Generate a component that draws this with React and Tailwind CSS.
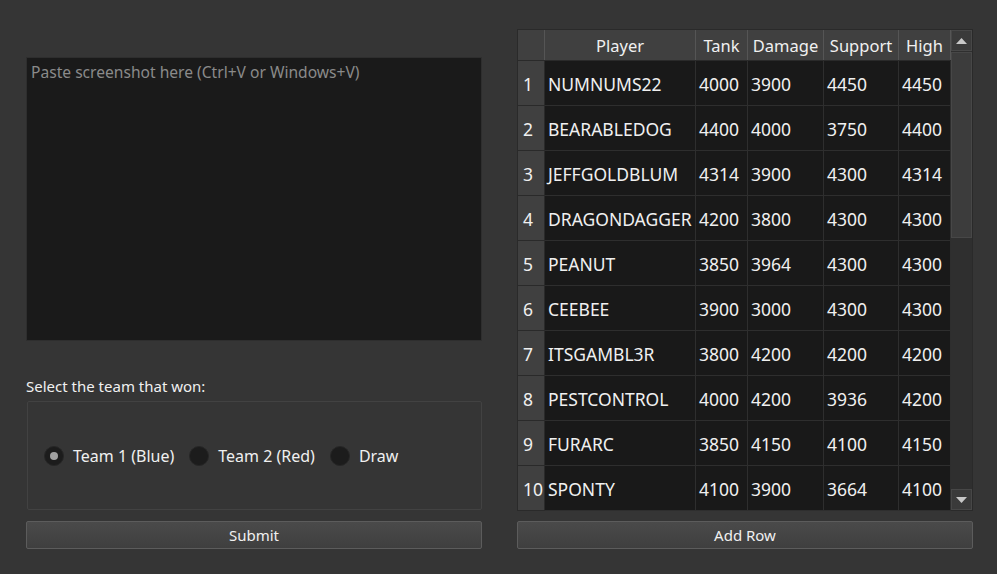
import { useState } from "react";

const rows = [
  ["NUMNUMS22", 4000, 3900, 4450, 4450],
  ["BEARABLEDOG", 4400, 4000, 3750, 4400],
  ["JEFFGOLDBLUM", 4314, 3900, 4300, 4314],
  ["DRAGONDAGGER", 4200, 3800, 4300, 4300],
  ["PEANUT", 3850, 3964, 4300, 4300],
  ["CEEBEE", 3900, 3000, 4300, 4300],
  ["ITSGAMBL3R", 3800, 4200, 4200, 4200],
  ["PESTCONTROL", 4000, 4200, 3936, 4200],
  ["FURARC", 3850, 4150, 4100, 4150],
  ["SPONTY", 4100, 3900, 3664, 4100],
];

const cols = [
  { label: "Player", w: "w-[151px]" },
  { label: "Tank", w: "w-[52px]" },
  { label: "Damage", w: "w-[76px]" },
  { label: "Support", w: "w-[75px]" },
  { label: "High", w: "w-[52px]" },
];

function Radio({ checked, label, onClick }) {
  return (
    <button type="button" onClick={onClick} className="flex items-center gap-[9px]">
      <span className="flex h-[20px] w-[20px] items-center justify-center rounded-full border border-[#262626] bg-[#1c1c1c]">
        {checked && <span className="h-[8px] w-[8px] rounded-full bg-[#a0a0a0]" />}
      </span>
      <span>{label}</span>
    </button>
  );
}

function Button({ children }) {
  return (
    <button type="button" className="h-[28px] w-full rounded-[2px] border border-[#5c5c5c] bg-gradient-to-b from-[#4a4a4a] to-[#3f3f3f] text-[15px] text-[#f0f0f0]">
      {children}
    </button>
  );
}

export default function App() {
  const [team, setTeam] = useState(0);

  return (
    <div className="flex h-[574px] w-[997px] gap-[35px] bg-[#353535] pl-[26px] pr-[24px] pt-[29px] text-[15px] text-[#f0f0f0]" style={{ fontFamily: '"Noto Sans", "Open Sans", sans-serif' }}>
      {/* left column */}
      <div className="flex w-[456px] shrink-0 flex-col">
        <div className="mt-[28px] h-[284px] border border-[#2e2e2e] bg-[#1a1a1a] px-[4px] pt-[3px] text-[15.6px] text-[#8a8a8a]">
          Paste screenshot here (Ctrl+V or Windows+V)
        </div>
        <div className="mt-[35px] leading-[20px]">Select the team that won:</div>
        <div className="mt-[5px] ml-[1px] flex h-[109px] items-center gap-[15px] rounded-[2px] border border-[#424242] pl-[16px] text-[16px]">
          <Radio checked={team === 0} label="Team 1 (Blue)" onClick={() => setTeam(0)} />
          <Radio checked={team === 1} label="Team 2 (Red)" onClick={() => setTeam(1)} />
          <Radio checked={team === 2} label="Draw" onClick={() => setTeam(2)} />
        </div>
        <div className="mt-[11px]">
          <Button>Submit</Button>
        </div>
      </div>

      {/* right column */}
      <div className="flex w-[456px] shrink-0 flex-col">
        <div className="flex h-[482px] border border-[#2a2a2a]">
          <div className="flex w-[433px] flex-col">
            <div className="flex h-[31px] border-b border-[#2a2a2a] bg-[#404040] text-[16.5px] leading-[32px]">
              <div className="w-[27px] border-r border-[#555]" />
              {cols.map((c) => (
                <div key={c.label} className={`${c.w} border-r border-[#555] text-center`}>
                  {c.label}
                </div>
              ))}
            </div>
            {rows.map((r, i) => (
              <div key={r[0]} className="flex h-[45px] text-[17.5px] leading-[46px]">
                <div className="w-[27px] border-b border-r border-[#2a2a2a] bg-[#404040] pl-[5px]">{i + 1}</div>
                {r.map((v, j) => (
                  <div key={j} className={`${cols[j].w} overflow-hidden whitespace-nowrap border-b border-r border-[#2e2e2e] bg-[#191919] pl-[3px]`}>
                    {v}
                  </div>
                ))}
              </div>
            ))}
          </div>
          <div className="flex w-[21px] flex-col bg-[#2f2f2f]">
            <div className="flex h-[21px] items-center justify-center border border-[#474747] bg-[#3a3a3a]">
              <svg width="11" height="6" viewBox="0 0 11 6"><path d="M0 6 L5.5 0 L11 6 Z" fill="#c8c8c8" /></svg>
            </div>
            <div className="flex-1 pt-[1px]">
              <div className="h-[186px] border border-[#474747] bg-[#3c3c3c]" />
            </div>
            <div className="flex h-[21px] items-center justify-center border border-[#474747] bg-[#3a3a3a]">
              <svg width="11" height="6" viewBox="0 0 11 6"><path d="M0 0 L5.5 6 L11 0 Z" fill="#c8c8c8" /></svg>
            </div>
          </div>
        </div>
        <div className="mt-[10px]">
          <Button>Add Row</Button>
        </div>
      </div>
    </div>
  );
}
